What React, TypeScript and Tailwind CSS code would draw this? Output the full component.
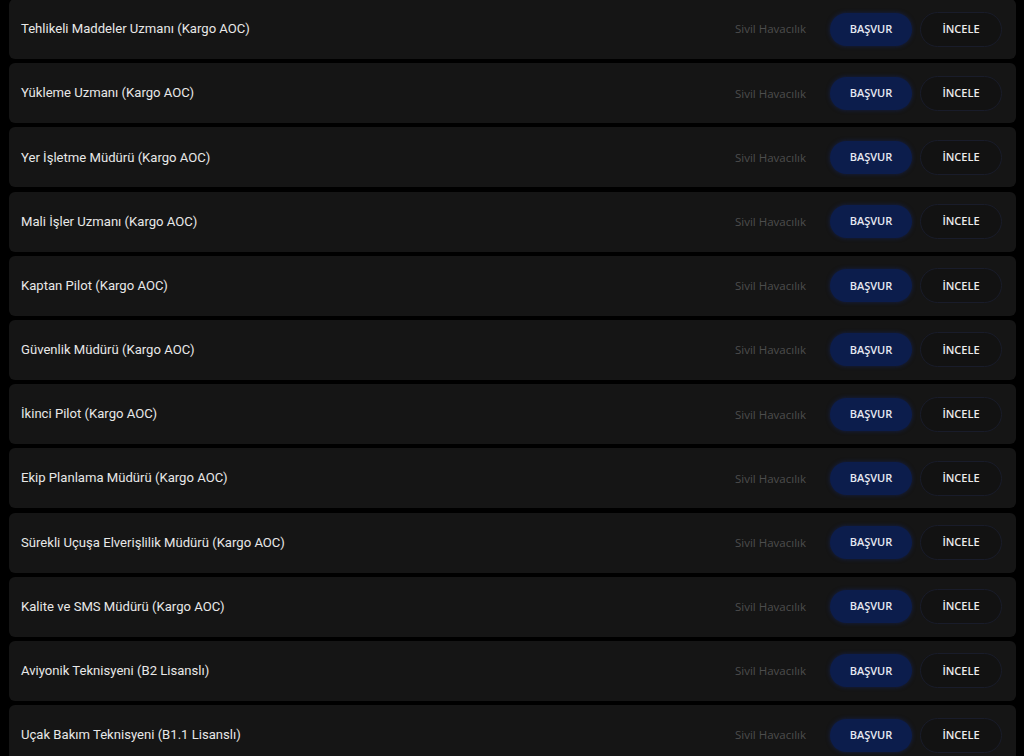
import React from 'react'

const jobs = [
  'Tehlikeli Maddeler Uzmanı (Kargo AOC)',
  'Yükleme Uzmanı (Kargo AOC)',
  'Yer İşletme Müdürü (Kargo AOC)',
  'Mali İşler Uzmanı (Kargo AOC)',
  'Kaptan Pilot (Kargo AOC)',
  'Güvenlik Müdürü (Kargo AOC)',
  'İkinci Pilot (Kargo AOC)',
  'Ekip Planlama Müdürü (Kargo AOC)',
  'Sürekli Uçuşa Elverişlilik Müdürü (Kargo AOC)',
  'Kalite ve SMS Müdürü (Kargo AOC)',
  'Aviyonik Teknisyeni (B2 Lisanslı)',
  'Uçak Bakım Teknisyeni (B1.1 Lisanslı)',
]

function JobRow({ title }: { title: string }) {
  return (
    <div className="flex h-[60px] items-center rounded-md bg-[#151515] pl-3 pr-[14px]">
      <span className="flex-1 font-['Roboto',sans-serif] text-[13.1px] text-[#e8e8e8]">{title}</span>
      <span className="mr-6 font-['Open_Sans',sans-serif] text-[11.5px] text-[#4d4d4d]">Sivil Havacılık</span>
      <div className="flex items-center gap-2">
        <button className="flex h-[33px] w-[82px] items-center justify-center rounded-full bg-[#0c1d4c] font-['Open_Sans',sans-serif] text-[11px] font-semibold text-[#e6e9f2] shadow-[0_0_4px_rgba(20,40,110,0.6)]">
          BAŞVUR
        </button>
        <button className="flex h-[35px] w-[82px] items-center justify-center rounded-full border border-[#191c2a] bg-[#121212] font-['Open_Sans',sans-serif] text-[11px] font-semibold text-[#ececec]">
          İNCELE
        </button>
      </div>
    </div>
  )
}

export default function App() {
  return (
    <div className="h-[756px] overflow-hidden bg-black pl-[9px] pr-2">
      <div className="-mt-px flex flex-col gap-[4.2px]">
        {jobs.map((job) => (
          <JobRow key={job} title={job} />
        ))}
      </div>
    </div>
  )
}
